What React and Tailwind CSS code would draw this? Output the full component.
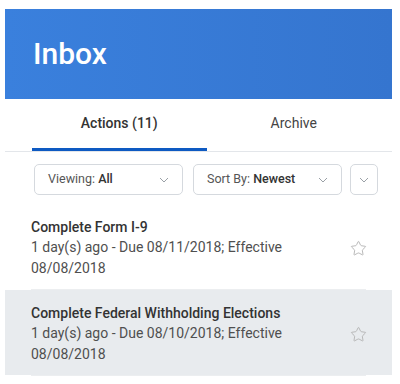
import { Star } from 'lucide-react'

const items = [
  { title: 'Complete Form I-9', due: '08/11/2018', active: false },
  { title: 'Complete Federal Withholding Elections', due: '08/10/2018', active: true },
]

function Chevron({ className = '' }) {
  return (
    <svg width="10" height="6" viewBox="0 0 10 6" className={className}>
      <polyline points="1,1 5,5 9,1" fill="none" stroke="#9aa0a6" strokeWidth="1" />
    </svg>
  )
}

function FilterBox({ label, value }) {
  return (
    <div className="w-[149px] h-[31px] border border-[#d5d9de] rounded-[5px] flex items-center pl-[13px] pr-[13px] text-[12.5px]">
      <span className="flex-1 text-[#555]">
        {label} <span className="font-medium text-[#333]">{value}</span>
      </span>
      <Chevron />
    </div>
  )
}

export default function App() {
  return (
    <div className="w-[400px] h-[384px] bg-white pt-[9px] pl-[5px] pr-[8px]" style={{ fontFamily: 'Roboto, sans-serif' }}>
      {/* Header */}
      <div className="h-[90px] bg-gradient-to-r from-[#3a80dd] to-[#3575cf] flex items-center pl-[28px]">
        <h1 className="text-[30px] font-medium text-white leading-none">Inbox</h1>
      </div>

      {/* Tabs */}
      <div className="border-b border-[#e3e6ea]">
        <div className="ml-[27px] w-[349px] flex text-[14px]">
          <div className="flex-1 h-[52px] flex items-center justify-center border-b-[3px] border-[#0e5ac2] font-medium text-[#333]">
            Actions (11)
          </div>
          <div className="flex-1 h-[52px] flex items-center justify-center border-b-[3px] border-transparent text-[#444]">
            Archive
          </div>
        </div>
      </div>

      {/* Filters */}
      <div className="pl-[29px] pt-[12px] pb-[9px] flex items-center">
        <FilterBox label="Viewing:" value="All" />
        <div className="ml-[10px]">
          <FilterBox label="Sort By:" value="Newest" />
        </div>
        <div className="ml-[8px] w-[28px] h-[31px] border border-[#d5d9de] rounded-[5px] flex items-center justify-center">
          <Chevron />
        </div>
      </div>

      {/* List */}
      <div>
        {items.map((item) => (
          <div key={item.title}>
            <div className={`${item.active ? 'bg-[#e8ebee]' : ''} pl-[26px] pr-[25px] pt-[13px] pb-[10px] flex`}>
              <div className="flex-1 pr-[30px]">
                <div className="text-[14px] leading-[20px] font-medium text-[#333]">{item.title}</div>
                <div className="text-[14px] leading-[21px] text-[#4f4f4f]">
                  1 day(s) ago - Due {item.due}; Effective 08/08/2018
                </div>
              </div>
              <div className="pt-[23px]">
                <Star size={17} strokeWidth={1.3} className="text-[#b3b3b3]" />
              </div>
            </div>
            <div className="mx-[26px] h-px bg-[#eceef0]" />
          </div>
        ))}
      </div>
    </div>
  )
}
